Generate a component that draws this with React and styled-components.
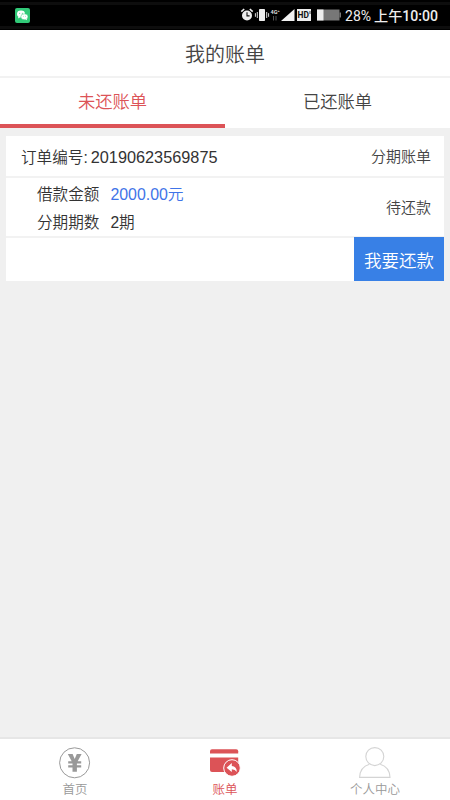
import styled, { createGlobalStyle } from "styled-components";

const red = "#dc5357";
const blue = "#3880e6";
const lightGrey = "#f0f0f0";

const GlobalStyle = createGlobalStyle`
    body {
        background-color: ${lightGrey};
        font-family: "Liberation Sans", "Noto Sans CJK SC", sans-serif;
        font-weight: 350;
        margin: 0;
    }
`;

const Page = styled.div`
    background-color: ${lightGrey};
    display: flex;
    flex-direction: column;
    height: 800px;
    overflow: hidden;
    width: 450px;
`;

const StatusBar = styled.div`
    align-items: center;
    background-color: #000;
    box-shadow: inset 0 2px #000, inset 0 5px #0d0d0d, inset 0 -1px #000, inset 0 -4px #0d0d0d;
    box-sizing: border-box;
    color: #eee;
    display: flex;
    flex-shrink: 0;
    height: 30px;
    justify-content: space-between;
    padding: 0 12px 0 15px;
`;

const StatusIcons = styled.div`
    align-items: center;
    display: flex;
`;

const Battery = styled.span`
    font-family: Roboto, sans-serif;
    font-size: 14px;
    font-weight: 400;
    line-height: 20px;
    margin-left: 3px;
    padding-top: 1px;
    width: 29px;
    white-space: nowrap;
`;

const Clock = styled.span`
    font-family: Roboto, "Noto Sans CJK SC", sans-serif;
    font-size: 14.1px;
    font-weight: 500;
    line-height: 20px;
    padding-top: 1px;
    white-space: nowrap;
`;

const Header = styled.header`
    background-color: #fff;
    border-bottom: 2px solid #f2f2f2;
    box-sizing: border-box;
    color: #444;
    flex-shrink: 0;
    font-size: 20px;
    height: 48px;
    line-height: 50px;
    text-align: center;
`;

const Tabs = styled.div`
    display: flex;
    flex-shrink: 0;
    height: 50px;
`;

const Tab = styled.div`
    background-color: #fff;
    border-bottom: 4px solid ${({ $active }) => ($active ? red : "#fff")};
    box-sizing: border-box;
    color: ${({ $active }) => ($active ? red : "#444")};
    flex: 1;
    font-size: 17.3px;
    line-height: 49px;
    text-align: center;
`;

const Card = styled.section`
    background-color: #fff;
    color: #333;
    font-size: 15.6px;
    margin: 8px 6px 0;
`;

const CardRow = styled.div`
    align-items: center;
    border-bottom: 2px solid #f2f2f2;
    box-sizing: border-box;
    display: flex;
    height: ${({ $height }) => $height}px;
    justify-content: space-between;
    padding: 0 13px 0 ${({ $indent }) => $indent}px;
`;

const OrderNumber = styled.div`
    align-items: baseline;
    display: flex;
    gap: 3px;
    line-height: 24px;
    padding-top: 3px;
`;

const Digits = styled.span`
    font-size: 16.3px;
`;

const Note = styled.div`
    color: #444;
    font-size: 15px;
    line-height: 20px;
    padding-top: 2px;
`;

const Details = styled.div`
    display: grid;
    column-gap: 11px;
    grid-template-columns: auto auto;
    line-height: 28px;
    padding-top: 4px;
`;

const Amount = styled.span`
    color: #3f74e8;
    font-size: 15.9px;
`;

const CardFooter = styled.div`
    display: flex;
    height: 43px;
    justify-content: flex-end;
`;

const PayButton = styled.button`
    background-color: ${blue};
    border: 0;
    color: #fff;
    font-family: inherit;
    font-size: 17.5px;
    font-weight: inherit;
    height: 44px;
    margin-top: -1px;
    padding: 0;
    width: 90px;
`;

const BottomNav = styled.nav`
    background-color: #fff;
    border-top: 2px solid #e6e6e6;
    box-sizing: border-box;
    display: flex;
    flex-shrink: 0;
    height: 63px;
    margin-top: auto;
`;

const NavItem = styled.div`
    align-items: center;
    color: ${({ $active }) => ($active ? red : "#999")};
    display: flex;
    flex: 1;
    flex-direction: column;
    font-size: 12.5px;
    line-height: 20px;
    padding-top: 7px;
`;

const WechatIcon = () => (
    <svg width="15" height="15" viewBox="0 0 15 15">
        <rect width="15" height="15" rx="2" fill="#31c978" />
        <ellipse cx="6" cy="6" rx="4" ry="3.4" fill="#fff" />
        <path d="M3.4 8.4 3 10.5l2.2-1.2z" fill="#fff" />
        <ellipse cx="9.4" cy="8.8" rx="3.6" ry="3" fill="#fff" stroke="#31c978" strokeWidth=".5" />
        <path d="m10.2 11.2 1.8 1-.3-1.8z" fill="#fff" />
        <g fill="#31c978">
            <circle cx="4.7" cy="5.2" r=".5" />
            <circle cx="7.3" cy="5.2" r=".5" />
            <circle cx="8.3" cy="8.2" r=".4" />
            <circle cx="10.6" cy="8.2" r=".4" />
        </g>
    </svg>
);

const SignalIcons = () => (
    <svg width="102" height="16" viewBox="0 0 102 16">
        {/* alarm */}
        <circle cx="7" cy="8.5" r="5" fill="#eee" />
        <path d="M1.3 4.6 4.2 2M12.7 4.6 9.8 2" stroke="#eee" strokeWidth="1.6" />
        <path d="M7 5.3v3.6h2.6" fill="none" stroke="#111" strokeWidth="1.1" />
        {/* vibrate */}
        <rect x="19" y="2" width="6" height="12" rx=".8" fill="#eee" />
        <path d="M17.3 5v6M26.7 5v6M15.4 6.2v3.6M28.6 6.2v3.6" stroke="#ddd" strokeWidth="1" />
        {/* network */}
        <text x="30.5" y="7" fill="#ddd" fontFamily="Roboto" fontSize="5.6" fontWeight="700">4G⁺</text>
        <path d="M33.5 9v4.5M36 9v4.5" stroke="#555" strokeWidth="1" />
        <path d="M54.5 2v12H41z" fill="#f2f2f2" />
        <rect x="57" y="2" width="14" height="12" fill="#eee" />
        <text x="57.6" y="11.2" fill="#111" fontFamily="Roboto" fontSize="8.4" fontWeight="700">HD</text>
        <path d="M70 4v3" stroke="#111" strokeWidth=".8" />
        {/* battery */}
        <rect x="77" y="2.5" width="22.5" height="11" fill="#777" />
        <rect x="77" y="2.5" width="6.5" height="11" fill="#eee" />
        <rect x="99.5" y="5.5" width="1.5" height="5" fill="#777" />
    </svg>
);

const HomeIcon = () => (
    <svg width="34" height="34" viewBox="0 0 34 34">
        <circle cx="16.6" cy="16.8" r="15" fill="none" stroke="#999" strokeWidth="1" />
        <path d="M9.8 8h4.8l2.1 5 2.1-5h4.8l-3.9 7.2h3.5v2.4h-4.3v1.6h4.3v2.4h-4.3v4.2h-4.4v-4.2h-4.3v-2.4h4.3v-1.6h-4.3v-2.4h3.5z" fill="#999" />
    </svg>
);

const BillIcon = () => (
    <svg width="34" height="34" viewBox="0 0 34 34">
        <path d="M2 7.4V5.2Q2 3.2 4 3.2h24.2q2 0 2 2v2.2z" fill={red} />
        <path d="M2 11.4h28.2v12.6q0 2-2 2H4q-2 0-2-2z" fill={red} />
        <circle cx="24" cy="22" r="8.3" fill={red} stroke="#fff" strokeWidth="1" />
        <path d="m18.6 21.7 5.2-4.6v2.8q5 .5 5 6.1-1.6-2.6-5-2.7v2.8z" fill="#fff" />
    </svg>
);

const UserIcon = () => (
    <svg width="34" height="34" viewBox="0 0 34 34" fill="none" stroke="#d4d4d4" strokeWidth="1.1">
        <circle cx="16.8" cy="10.6" r="9" />
        <path d="M11.4 18.2C5.4 20 1.8 24.5 1.6 31.4h30.4C31.8 24.5 28.2 20 22.2 18.2" />
    </svg>
);

const App = () => {
    return (
        <>
            <GlobalStyle />
            <Page>
                <StatusBar>
                    <WechatIcon />
                    <StatusIcons>
                        <SignalIcons />
                        <Battery>28%</Battery>
                        <Clock>上午10:00</Clock>
                    </StatusIcons>
                </StatusBar>
                <Header>我的账单</Header>
                <Tabs>
                    <Tab $active>未还账单</Tab>
                    <Tab>已还账单</Tab>
                </Tabs>
                <Card>
                    <CardRow $height={42} $indent={15}>
                        <OrderNumber>
                            <span>订单编号:</span>
                            <Digits>20190623569875</Digits>
                        </OrderNumber>
                        <Note>分期账单</Note>
                    </CardRow>
                    <CardRow $height={60} $indent={31}>
                        <Details>
                            <span>借款金额</span>
                            <Amount>2000.00元</Amount>
                            <span>分期期数</span>
                            <span>2期</span>
                        </Details>
                        <Note>待还款</Note>
                    </CardRow>
                    <CardFooter>
                        <PayButton type="button">我要还款</PayButton>
                    </CardFooter>
                </Card>
                <BottomNav>
                    <NavItem>
                        <HomeIcon />
                        首页
                    </NavItem>
                    <NavItem $active>
                        <BillIcon />
                        账单
                    </NavItem>
                    <NavItem>
                        <UserIcon />
                        个人中心
                    </NavItem>
                </BottomNav>
            </Page>
        </>
    );
};

export default App;
